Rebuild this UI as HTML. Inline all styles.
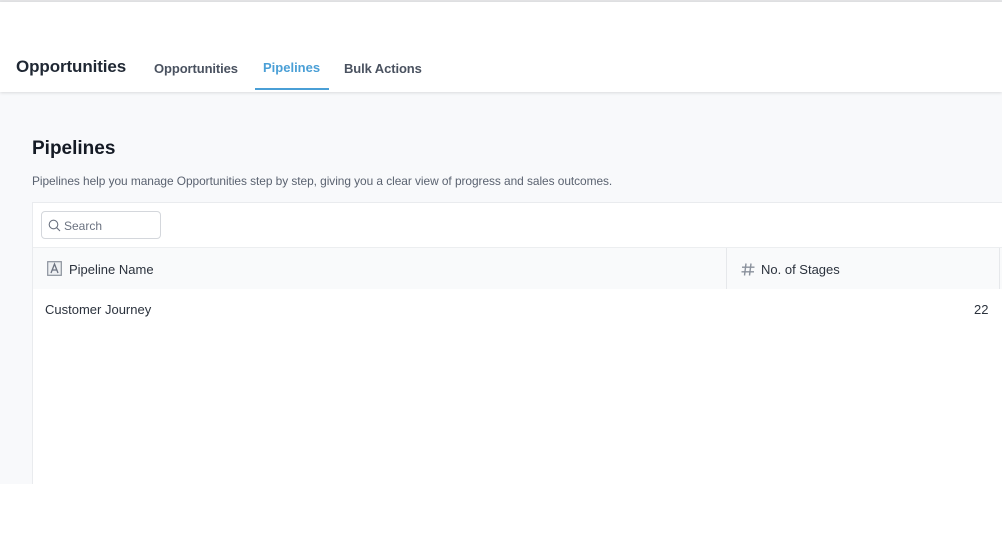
<!DOCTYPE html>
<html><head><style>
*{margin:0;padding:0;box-sizing:border-box}
body{width:1002px;height:555px;background:#fff;font-family:"Liberation Sans",Arial,sans-serif;position:relative;overflow:hidden}
.top{position:absolute;left:0;top:0;width:1002px;height:2px;background:#e3e4e6}
.hdr{position:absolute;left:0;top:2px;width:1002px;height:90px;background:#fff;box-shadow:0 1px 3px rgba(0,0,0,.12);z-index:2}
.main{position:absolute;left:0;top:92px;width:1002px;height:392px;background:#f8f9fb}
.t{position:absolute;white-space:nowrap}
.card{position:absolute;left:32px;top:202px;width:975px;height:282px;background:#fff;border:1px solid #e9ebee;border-bottom:none}
</style></head><body>
<div class="top"></div>
<div class="hdr">
<div class="t" style="left:16px;top:55px;font-size:17px;font-weight:bold;color:#1f2733;letter-spacing:-0.1px">Opportunities</div>
<div class="t" style="left:154px;top:59px;font-size:13px;font-weight:bold;color:#4a5260;letter-spacing:-0.1px">Opportunities</div>
<div class="t" style="left:263px;top:58px;font-size:13px;font-weight:bold;color:#4a9fd6">Pipelines</div>
<div style="position:absolute;left:255px;top:86px;width:74px;height:2px;background:#4a9fd6"></div>
<div class="t" style="left:344px;top:59px;font-size:13px;font-weight:bold;color:#4a5260;letter-spacing:-0.1px">Bulk Actions</div>
</div>
<div class="main"></div>
<div class="t" style="left:32px;top:138px;font-size:19px;font-weight:bold;color:#141a24">Pipelines</div>
<div class="t" style="left:32px;top:174px;font-size:11.9px;color:#5a6270;letter-spacing:-0.05px">Pipelines help you manage Opportunities step by step, giving you a clear view of progress and sales outcomes.</div>
<div class="card">
<div style="position:absolute;left:8px;top:8px;width:120px;height:28px;border:1px solid #d4d7dc;border-radius:4px"></div>
<svg style="position:absolute;left:15px;top:16px" width="13" height="13" viewBox="0 0 13 13"><circle cx="5.5" cy="5.5" r="4.3" fill="none" stroke="#6b7280" stroke-width="1.1"/><path d="M8.7 8.7L12 12" stroke="#6b7280" stroke-width="1.1"/></svg>
<div class="t" style="left:31px;top:16px;font-size:12px;color:#6b7280">Search</div>
<div style="position:absolute;left:0;top:44px;width:975px;height:42px;background:#f9fafb;border-top:1px solid #eceef0"></div>
<div style="position:absolute;left:693px;top:45px;width:1px;height:41px;background:#e6e8eb"></div>
<div style="position:absolute;left:966px;top:45px;width:1px;height:41px;background:#e6e8eb"></div>
<svg style="position:absolute;left:14px;top:58px" width="15" height="15" viewBox="0 0 15 15"><rect x="0.7" y="0.7" width="13.6" height="13.6" fill="#eef0f3" stroke="#8a919c" stroke-width="1.2"/><path d="M4 12L7.5 3 11 12M5.2 9h4.6" fill="none" stroke="#6b7280" stroke-width="1.3"/></svg>
<div class="t" style="left:36px;top:59px;font-size:13px;color:#2b323d">Pipeline Name</div>
<svg style="position:absolute;left:708px;top:60px" width="14" height="13" viewBox="0 0 14 13"><path d="M5 0.5L3.5 12.5M10 0.5L8.5 12.5M1 4.2h12.5M0.5 8.8h12.5" stroke="#8a919c" stroke-width="1.4" fill="none"/></svg>
<div class="t" style="left:728px;top:59px;font-size:13px;color:#2b323d">No. of Stages</div>
<div class="t" style="left:12px;top:99px;font-size:13px;color:#2b323d">Customer Journey</div>
<div class="t" style="left:941px;top:99px;font-size:13px;color:#2b323d">22</div>
</div>
</body></html>
